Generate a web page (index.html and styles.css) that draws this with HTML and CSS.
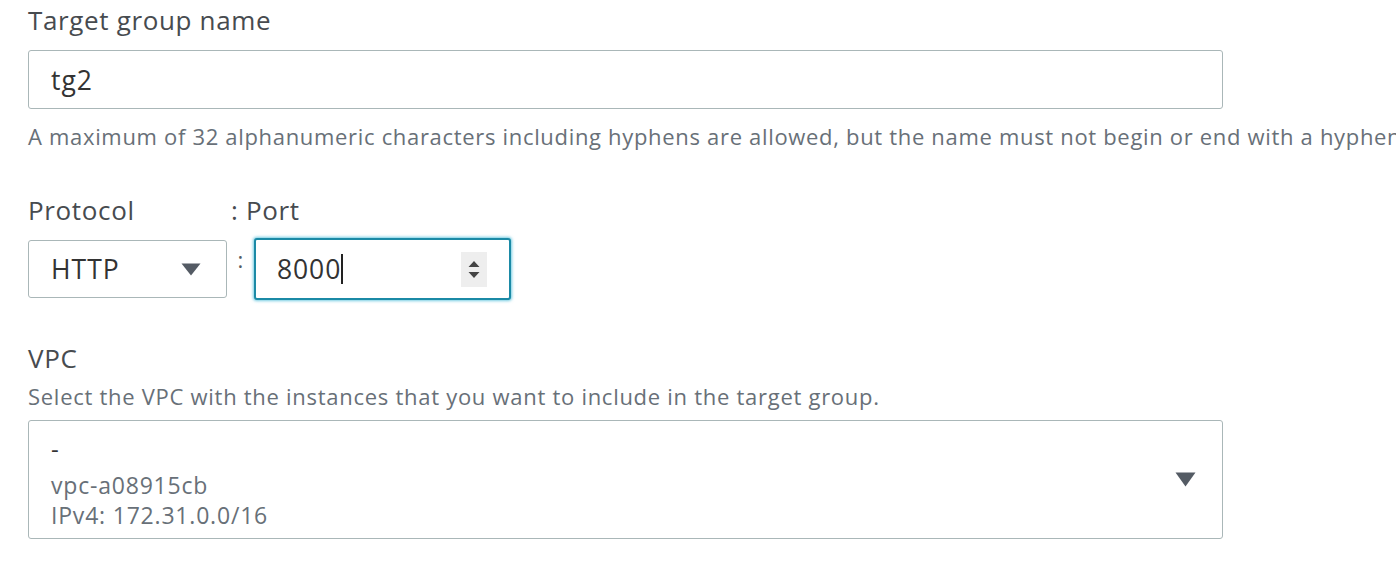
FILE: index.html
```html
<!DOCTYPE html>
<html>
<head>
<meta charset="utf-8">
<link rel="stylesheet" href="styles.css">
</head>
<body>
<div class="form">
  <div class="label first">Target group name</div>
  <div class="input wide"><span class="val">tg2</span></div>
  <div class="help">A maximum of 32 alphanumeric characters including hyphens are allowed, but the name must not begin or end with a hyphen.</div>

  <div class="row-labels">
    <div class="label proto-label">Protocol</div>
    <div class="label">: Port</div>
  </div>
  <div class="row">
    <div class="select proto">
      <span class="val">HTTP</span>
      <svg class="caret" width="20" height="13" viewBox="0 0 20 13"><path d="M0.5 0.5 H19.5 L10 12.5 Z" fill="#545b64"/></svg>
    </div>
    <div class="colon">:</div>
    <div class="input port">
      <span class="val">8000</span><span class="cursor"></span>
      <div class="spinner">
        <svg width="26" height="35" viewBox="0 0 26 35"><path d="M7.5 15 L13 9 L18.5 15 Z M7.5 20 L18.5 20 L13 26 Z" fill="#444"/></svg>
      </div>
    </div>
  </div>

  <div class="label vpc-label">VPC</div>
  <div class="desc">Select the VPC with the instances that you want to include in the target group.</div>
  <div class="select wide vpc">
    <div class="opts">
      <div class="dash">-</div>
      <div class="sub">vpc-a08915cb</div>
      <div class="sub">IPv4: 172.31.0.0/16</div>
    </div>
    <svg class="caret" width="21" height="15" viewBox="0 0 21 15"><path d="M0.5 0.5 H20.5 L10.5 14.5 Z" fill="#545b64"/></svg>
  </div>
</div>
</body>
</html>
```
FILE: styles.css
```css
html, body {
  margin: 0;
  padding: 0;
  background: #ffffff;
}
body {
  font-family: "Open Sans", "Noto Sans", sans-serif;
  color: #444444;
  overflow: hidden;
  width: 1396px;
  height: 586px;
}
.form {
  padding-left: 28px;
}
.label {
  font-size: 26px;
  letter-spacing: 0.65px;
  line-height: 30px;
  color: #474b4f;
}
.label.first {
  padding-top: 5px;
  margin-bottom: 15px;
}
.input, .select {
  box-sizing: border-box;
  border: 1.5px solid #aab7b8;
  border-radius: 3px;
  background: #fff;
  display: flex;
  align-items: center;
}
.wide {
  width: 1195px;
}
.input.wide {
  height: 59px;
  padding-left: 22px;
}
.val {
  font-size: 26.5px;
  letter-spacing: 1px;
  color: #333333;
}
.help {
  font-size: 22px;
  letter-spacing: 0.68px;
  line-height: 30px;
  color: #687078;
  margin-top: 12px;
  white-space: nowrap;
}
.row-labels {
  display: flex;
  margin-top: 44px;
}
.proto-label {
  width: 203px;
}
.row {
  display: flex;
  align-items: center;
  margin-top: 13px;
}
.select.proto {
  width: 199px;
  height: 58px;
  padding: 0 25px 0 22px;
  justify-content: space-between;
}
.colon {
  width: 27px;
  font-size: 22px;
  color: #545b64;
  text-align: center;
  align-self: flex-start;
  margin-top: 6px;
}
.input.port {
  width: 257px;
  height: 62px;
  border: 2.5px solid #1b8aa6;
  box-shadow: 0 0 3px 1px rgba(0, 161, 201, 0.55);
  padding-left: 21px;
  padding-right: 22px;
}
.input.port .val {
  letter-spacing: 0.9px;
}
.cursor {
  width: 2px;
  height: 30px;
  background: #222;
  margin-left: 0;
}
.spinner {
  margin-left: auto;
  width: 26px;
  height: 35px;
  background: #eeeeee;
  display: flex;
}
.vpc-label {
  margin-top: 43px;
}
.desc {
  font-size: 22px;
  letter-spacing: 0.72px;
  line-height: 30px;
  color: #687078;
  margin-top: 8px;
}
.select.vpc {
  height: 119px;
  margin-top: 9px;
  padding: 0 26px 0 22px;
  justify-content: space-between;
}
.opts {
  display: flex;
  flex-direction: column;
  margin-top: 4px;
}
.dash {
  font-size: 24px;
  line-height: 30px;
  color: #333;
  margin-bottom: 6px;
}
.sub {
  font-size: 23px;
  letter-spacing: 0.8px;
  line-height: 30px;
  color: #687078;
}
```
